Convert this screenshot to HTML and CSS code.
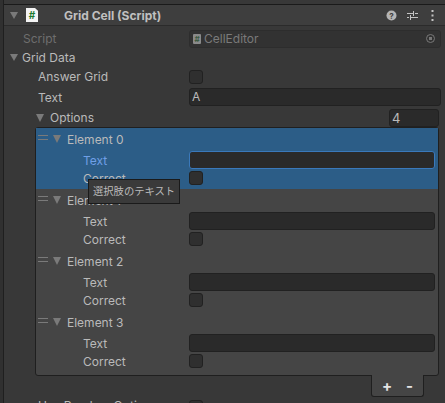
FILE: index.html
```html
<!DOCTYPE html>
<html>
<head>
	<title>Grid Cell</title>
	<link rel="stylesheet" href="styles.css">
</head>
<body>
	<div class="inspector">
		<div class="header">
			<span class="tri head-tri"></span>
			<span class="script-icon">#</span>
			<span class="title">Grid Cell (Script)</span>
			<span class="head-icons">
				<svg class="help" width="11" height="11" viewBox="0 0 11 11"><circle cx="5.5" cy="5.5" r="5" fill="#b4b4b4"/><text x="5.5" y="8.8" class="q">?</text></svg>
				<svg class="sliders" width="11" height="11" viewBox="0 0 11 11" fill="none" stroke="#c4c4c4"><path d="M0 3.5h6M8 3.5h3M0 7.5h2M4 7.5h7M6.5 1v5M3.5 5v5"/></svg>
				<svg class="dots" width="3" height="11" viewBox="0 0 3 11" fill="#c4c4c4"><rect x="0.5" y="0" width="2" height="2"/><rect x="0.5" y="4.5" width="2" height="2"/><rect x="0.5" y="9" width="2" height="2"/></svg>
			</span>
		</div>

		<div class="row script-row">
			<span class="label dim">Script</span>
			<div class="field ref">
				<span class="ref-icon">#</span>
				<span class="ref-name">CellEditor</span>
				<span class="ref-dot"></span>
			</div>
		</div>
		<div class="row data-row">
			<span class="tri"></span>
			<span class="label">Grid Data</span>
		</div>
		<div class="row sub answer-row">
			<span class="label">Answer Grid</span>
			<span class="check"></span>
		</div>
		<div class="row sub text-row">
			<span class="label">Text</span>
			<div class="field">A</div>
		</div>
		<div class="row options-row">
			<span class="tri big"></span>
			<span class="label">Options</span>
			<div class="field count">4</div>
		</div>

		<div class="list">
			<div class="element selected">
				<div class="el-head"><span class="grip"></span><span class="tri big"></span><span class="label">Element 0</span></div>
				<div class="el-row"><span class="label focus">Text</span><div class="field focused"></div></div>
				<div class="el-row"><span class="label">Correct</span><span class="check"></span></div>
			</div>
			<div class="element">
				<div class="el-head"><span class="grip"></span><span class="tri big"></span><span class="label">Element 1</span></div>
				<div class="el-row"><span class="label">Text</span><div class="field"></div></div>
				<div class="el-row"><span class="label">Correct</span><span class="check"></span></div>
			</div>
			<div class="element">
				<div class="el-head"><span class="grip"></span><span class="tri big"></span><span class="label">Element 2</span></div>
				<div class="el-row"><span class="label">Text</span><div class="field"></div></div>
				<div class="el-row"><span class="label">Correct</span><span class="check"></span></div>
			</div>
			<div class="element">
				<div class="el-head"><span class="grip"></span><span class="tri big"></span><span class="label">Element 3</span></div>
				<div class="el-row"><span class="label">Text</span><div class="field"></div></div>
				<div class="el-row"><span class="label">Correct</span><span class="check"></span></div>
			</div>
		</div>
		<div class="list-foot">
			<span class="plus">+</span>
			<span class="minus">-</span>
		</div>
		<div class="row sub last-row">
			<span class="label">Use Random Option</span>
			<span class="check"></span>
		</div>
	</div>
	<div class="tooltip">選択肢のテキスト</div>
</body>
</html>
```

FILE: styles.css
```css
html, body {
	margin: 0;
	padding: 0;
	height: 403px;
	overflow: hidden;
	background: #383838;
	font-family: Inter, "Noto Sans CJK JP", sans-serif;
	font-size: 12px;
	color: #bababa;
}

.inspector {
	margin-left: 3px;
	padding-top: 4px;
	height: 399px;
	border-left: 1px solid #1f1f1f;
	box-shadow: -3px 0 0 #303030;
}

.header {
	display: flex;
	align-items: center;
	height: 20px;
	border-top: 1px solid #1a1a1a;
	border-bottom: 1px solid #2b2b2b;
	background: #3e3e3e;
}

.title {
	font-weight: 700;
	color: #c0c0c0;
	margin-left: 26px;
}

.head-icons {
	display: flex;
	align-items: center;
	margin-left: auto;
	margin-right: 11px;
}

.sliders {
	margin-left: 10px;
}

.dots {
	margin-left: 13px;
}

.q {
	font-size: 8px;
	font-weight: 700;
	text-anchor: middle;
	fill: #3e3e3e;
}

.script-icon {
	width: 12px;
	height: 14px;
	margin-left: 8px;
	background: #f4f4f4;
	clip-path: polygon(0 0, 75% 0, 100% 20%, 100% 100%, 0 100%);
	color: #1c7a30;
	font-size: 10px;
	font-weight: 700;
	line-height: 14px;
	text-align: center;
}

.tri {
	flex: none;
	width: 0;
	height: 0;
	border-left: 4px solid transparent;
	border-right: 4px solid transparent;
	border-top: 7px solid #7a7a7a;
}

.tri.big {
	border-left-width: 4.5px;
	border-right-width: 4.5px;
	border-top-width: 8px;
}

.head-tri {
	margin-left: 6px;
}

.row {
	display: flex;
	align-items: center;
	height: 18px;
}

.label {
	white-space: nowrap;
}

.dim {
	color: #6e6e6e;
}

.field {
	flex: none;
	box-sizing: border-box;
	width: 252px;
	height: 18px;
	margin-left: auto;
	margin-right: 4px;
	padding-left: 2px;
	background: #2a2a2a;
	border: 1px solid #212121;
	border-radius: 3px;
	line-height: 16px;
}

.check {
	flex: none;
	box-sizing: border-box;
	width: 14px;
	height: 14px;
	background: #2f2f2f;
	border: 1px solid #212121;
	border-radius: 3px;
}

.script-row {
	margin-top: 3px;
	height: 19px;
}

.script-row .label {
	margin-left: 19px;
}

.ref {
	display: flex;
	align-items: center;
	background: #323232;
	border-color: #2d2d2d;
	color: #7a7a7a;
}

.ref-icon {
	width: 8px;
	height: 10px;
	margin-left: 1px;
	margin-right: 3px;
	background: #8a8a8a;
	color: #3c5a42;
	font-size: 8px;
	font-weight: 700;
	line-height: 10px;
	text-align: center;
	border-radius: 1px;
}

.ref-dot {
	box-sizing: border-box;
	width: 9px;
	height: 9px;
	margin-left: auto;
	margin-right: 5px;
	border: 1px solid #777;
	border-radius: 50%;
	background: radial-gradient(circle, #777 0 1.5px, transparent 2px);
}

.data-row {
	height: 19px;
	padding-left: 6px;
}

.data-row .label {
	margin-left: 4px;
}

.sub .label {
	margin-left: 34px;
}

.sub .check {
	margin-left: auto;
	margin-right: 242px;
}

.answer-row {
	height: 19px;
}

.text-row {
	height: 22px;
}

.options-row {
	height: 19px;
	padding-left: 32px;
}

.options-row .label {
	margin-left: 6px;
}

.count {
	width: 50px;
	margin-right: 6px;
	font-size: 13px;
}

.list {
	box-sizing: border-box;
	width: 404px;
	height: 249px;
	margin-left: 31px;
	background: #454545;
	border: 1px solid #1f1f1f;
	border-radius: 3px;
}

.element {
	height: 61px;
}

.selected {
	background: #2c5d87;
}

.el-head {
	display: flex;
	align-items: center;
	height: 22px;
	margin-bottom: 1px;
	padding-left: 2px;
}

.grip {
	flex: none;
	width: 10px;
	height: 3px;
	margin-right: 5px;
	margin-bottom: 4px;
	border-top: 1px solid #7a7a7a;
	border-bottom: 1px solid #7a7a7a;
}

.el-head .label {
	margin-left: 6px;
}

.el-row {
	display: flex;
	align-items: center;
	height: 18px;
	padding-left: 47px;
}

.el-row .check {
	margin-left: auto;
	margin-right: 235px;
}

.el-row .field {
	width: 246px;
	margin-right: 3px;
}

.focus {
	color: #6f9fe6;
}

.field.focused {
	border-color: #3a79bb;
}

.list-foot {
	display: flex;
	justify-content: center;
	align-items: center;
	gap: 14px;
	box-sizing: border-box;
	width: 53px;
	height: 22px;
	margin-left: 367px;
	margin-top: -1px;
	background: #454545;
	border: 1px solid #1f1f1f;
	border-top: 0;
	border-radius: 0 0 3px 3px;
	color: #e4e4e4;
	font-size: 15px;
	font-weight: 700;
}

.last-row {
	margin-top: 1px;
}

.last-row .label {
	align-self: flex-start;
	line-height: 16px;
}

.tooltip {
	position: absolute;
	left: 88px;
	top: 179px;
	box-sizing: border-box;
	width: 92px;
	height: 25px;
	padding-left: 4px;
	background: #3a3a3a;
	border: 1px solid #1a1a1a;
	font-size: 10.3px;
	line-height: 23px;
	white-space: nowrap;
}
```
